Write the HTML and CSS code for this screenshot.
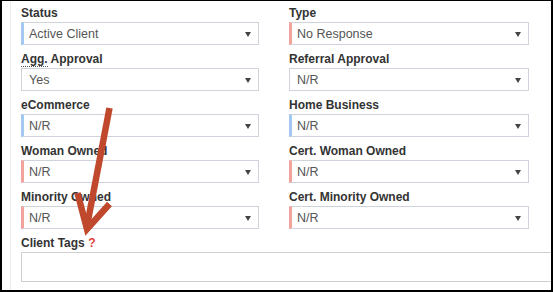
FILE: index.html
```html
<!DOCTYPE html>
<html lang="en">
<head>
    <meta charset="UTF-8">
    <meta name="viewport" content="width=device-width, initial-scale=1.0">
    <title>Client Details</title>
    <link rel="stylesheet" href="styles.css">
</head>
<body>
    <div class="frame">
        <div class="panel">
            <div class="form">
                <div class="field">
                    <label>Status</label>
                    <div class="select blue"><span>Active Client</span><span class="caret"></span></div>
                </div>
                <div class="field">
                    <label>Type</label>
                    <div class="select pink"><span>No Response</span><span class="caret"></span></div>
                </div>
                <div class="field">
                    <label><abbr title="Aggregate">Agg.</abbr> Approval</label>
                    <div class="select"><span>Yes</span><span class="caret"></span></div>
                </div>
                <div class="field">
                    <label>Referral Approval</label>
                    <div class="select"><span>N/R</span><span class="caret"></span></div>
                </div>
                <div class="field">
                    <label>eCommerce</label>
                    <div class="select blue"><span>N/R</span><span class="caret"></span></div>
                </div>
                <div class="field">
                    <label>Home Business</label>
                    <div class="select blue"><span>N/R</span><span class="caret"></span></div>
                </div>
                <div class="field">
                    <label>Woman Owned</label>
                    <div class="select pink"><span>N/R</span><span class="caret"></span></div>
                </div>
                <div class="field">
                    <label>Cert. Woman Owned</label>
                    <div class="select pink"><span>N/R</span><span class="caret"></span></div>
                </div>
                <div class="field">
                    <label>Minority Owned</label>
                    <div class="select pink"><span>N/R</span><span class="caret"></span></div>
                </div>
                <div class="field">
                    <label>Cert. Minority Owned</label>
                    <div class="select pink"><span>N/R</span><span class="caret"></span></div>
                </div>
                <div class="field wide">
                    <label>Client Tags <span class="help">?</span></label>
                    <textarea class="tags"></textarea>
                </div>
            </div>
        </div>
        <svg class="arrow" width="553" height="292" viewBox="0 0 553 292">
            <line x1="109.5" y1="108" x2="87" y2="226" stroke="#c0482d" stroke-width="6.5"/>
            <polyline points="77.5,193 87,229 109.5,204" fill="none" stroke="#c0482d" stroke-width="6.5" stroke-linejoin="miter"/>
        </svg>
    </div>
</body>
</html>
```

FILE: styles.css
```css
*{
    box-sizing: border-box;
    margin: 0;
    padding: 0;
    font-family: "Liberation Sans", Arial, sans-serif;
}
body{
    background-color: white;
}
.frame{
    position: relative;
    width: 553px;
    height: 292px;
    border: 2px solid black;
    border-top-width: 1px;
    overflow: hidden;
}
.panel{
    height: 100%;
    margin-left: 8px;
    border-left: 1px solid #ececec;
    padding: 4px 0 0 10px;
}
.form{
    display: grid;
    grid-template-columns: 238px 240px;
    column-gap: 30px;
}
.field{
    margin-bottom: 6px;
}
.field label{
    display: block;
    font-size: 12px;
    line-height: 14px;
    font-weight: bold;
    color: #333;
    padding-top: 1px;
    margin-bottom: 2px;
}
abbr{
    text-decoration: none;
    border-bottom: 1px dotted #555;
}
.help{
    color: #e2403a;
}
.select{
    display: flex;
    align-items: center;
    justify-content: space-between;
    height: 23px;
    border: 1px solid #cfd3dc;
    padding: 0 7px 0 7px;
    font-size: 12.5px;
    color: #555;
}
.blue{
    border-left: 3px solid #a3c8f1;
    padding-left: 5px;
}
.pink{
    border-left: 3px solid #f2a39c;
    padding-left: 5px;
}
.caret{
    width: 0;
    height: 0;
    border-left: 3px solid transparent;
    border-right: 3px solid transparent;
    border-top: 5px solid #444;
    margin-top: 1px;
}
.wide{
    grid-column: 1 / -1;
}
.tags{
    display: block;
    width: 560px;
    height: 30px;
    border: 1px solid #cfcfcf;
    resize: none;
}
.arrow{
    position: absolute;
    left: -2px;
    top: -1px;
    pointer-events: none;
}
```
